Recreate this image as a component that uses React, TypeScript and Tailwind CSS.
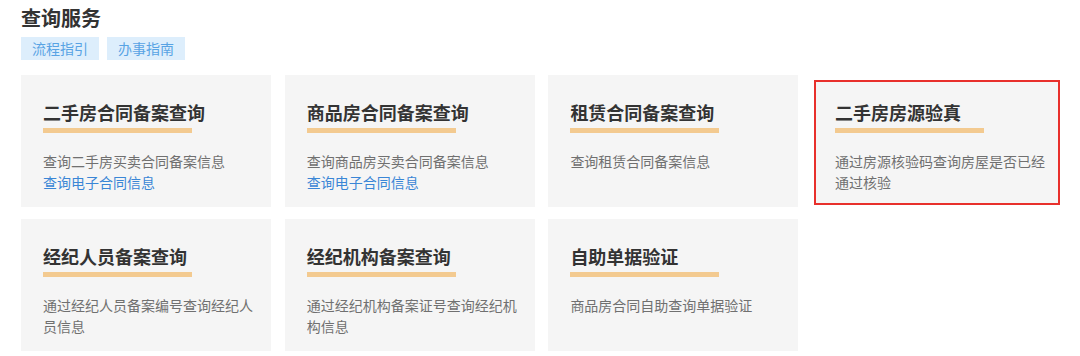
import React from "react";

type Item = { title: string; desc: string; link?: string; highlight?: boolean };

const items: Item[] = [
  { title: "二手房合同备案查询", desc: "查询二手房买卖合同备案信息", link: "查询电子合同信息" },
  { title: "商品房合同备案查询", desc: "查询商品房买卖合同备案信息", link: "查询电子合同信息" },
  { title: "租赁合同备案查询", desc: "查询租赁合同备案信息" },
  { title: "二手房房源验真", desc: "通过房源核验码查询房屋是否已经通过核验", highlight: true },
  { title: "经纪人员备案查询", desc: "通过经纪人员备案编号查询经纪人员信息" },
  { title: "经纪机构备案查询", desc: "通过经纪机构备案证号查询经纪机构信息" },
  { title: "自助单据验证", desc: "商品房合同自助查询单据验证" },
];

function CardBody({ item }: { item: Item }) {
  return (
    <>
      <div className="text-[18px] leading-[24px] font-bold text-[#333333] whitespace-nowrap">{item.title}</div>
      <div className="mt-[4px] h-[5px] w-[149px] bg-[#f3ca90]" />
      <div className="mt-[18px] text-[14px] leading-[21px] text-[#707070]">{item.desc}</div>
      {item.link && <div className="text-[14px] leading-[21px] text-[#3a86d6]">{item.link}</div>}
    </>
  );
}

function Card({ item }: { item: Item }) {
  if (item.highlight) {
    return (
      <div className="h-[132px] bg-white pt-[5px] pb-[2px] px-[2px]">
        <div className="h-full border-2 border-[#e8302c] bg-[#f5f5f5] pt-[18px] pl-[19px] pr-[12px]">
          <CardBody item={item} />
        </div>
      </div>
    );
  }
  return (
    <div className="h-[132px] bg-[#f5f5f5] pt-[25px] pl-[22px] pr-[16px]">
      <CardBody item={item} />
    </div>
  );
}

export default function App() {
  return (
    <div
      className="w-[1080px] h-[356px] bg-white pl-[21px] pt-[4px] overflow-hidden"
      style={{ fontFamily: '"Noto Sans CJK SC", "Noto Sans", sans-serif' }}
    >
      <div className="text-[20px] leading-[28px] font-bold text-[#333333]">查询服务</div>
      <div className="mt-[5px] flex gap-[8px]">
        <span className="h-[23px] px-[11px] text-[14px] leading-[23px] bg-[#ddeefc] text-[#58a3e4]">流程指引</span>
        <span className="h-[23px] px-[11px] text-[14px] leading-[23px] bg-[#ddeefc] text-[#58a3e4]">办事指南</span>
      </div>
      <div className="mt-[15px] grid grid-cols-[250px_250px_250px_250px] gap-x-[13.7px] gap-y-[12px]">
        {items.map((it) => (
          <Card key={it.title} item={it} />
        ))}
      </div>
    </div>
  );
}
